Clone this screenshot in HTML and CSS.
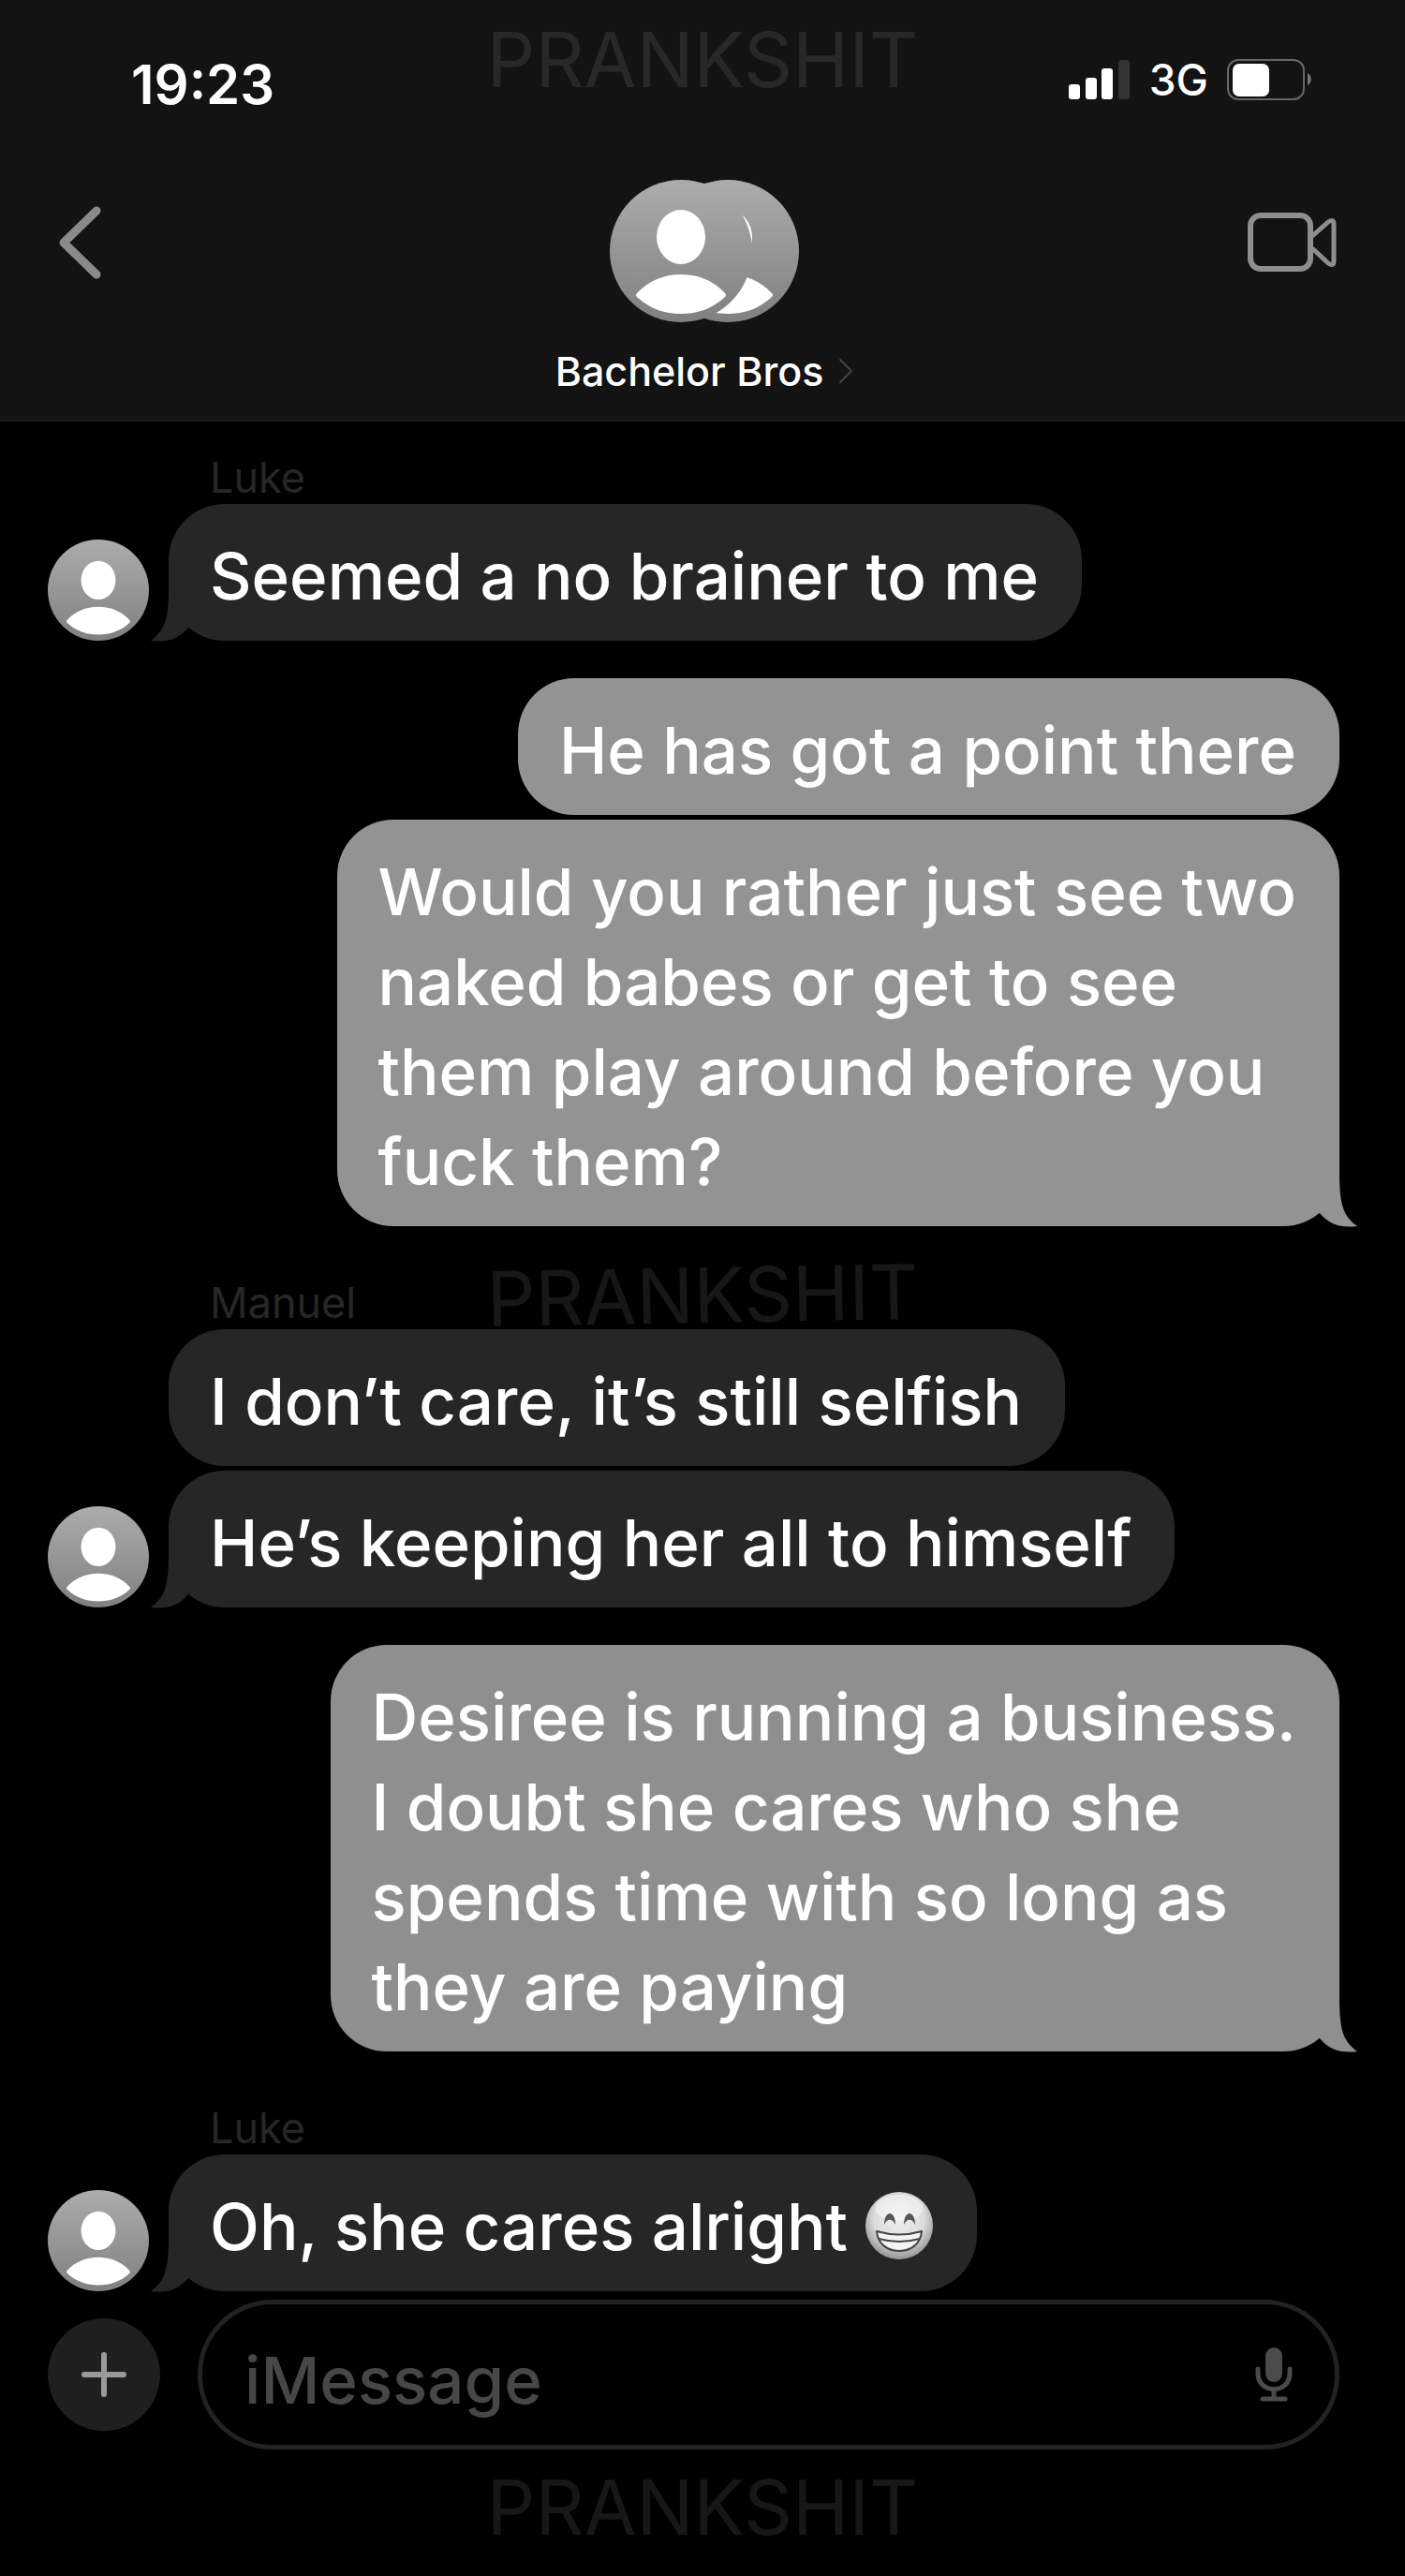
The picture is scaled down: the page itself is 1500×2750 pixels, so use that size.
FILE: index.html
```html
<!DOCTYPE html>
<html lang="en">
<head>
  <meta charset="UTF-8" />
  <meta name="viewport" content="width=device-width, initial-scale=1.0"/>
  <title>Bachelor Bros</title>
  <link rel="stylesheet" href="styles.css">
</head>
<body>

<!-- shared shapes -->
<svg class="defs" width="0" height="0" aria-hidden="true">
  <defs>
    <linearGradient id="avatarFill" x1="0" y1="0" x2="0" y2="1">
      <stop offset="0" stop-color="#acacac"/>
      <stop offset="1" stop-color="#808080"/>
    </linearGradient>
    <radialGradient id="faceFill" cx="0.5" cy="0.4" r="0.62">
      <stop offset="0" stop-color="#efefef"/>
      <stop offset="0.6" stop-color="#dcdcdc"/>
      <stop offset="1" stop-color="#8e8e8e"/>
    </radialGradient>
    <symbol id="avatar" viewBox="0 0 152 152">
      <circle cx="76" cy="76" r="76" fill="url(#avatarFill)"/>
      <ellipse cx="76" cy="61" rx="26" ry="29" fill="#fff"/>
      <path d="M29 121c12-13 28-20 47-20s35 7 47 20q2 2 0 4c-14 13-30 18-47 18s-33-5-47-18q-2-2 0-4z" fill="#fff"/>
    </symbol>
    <symbol id="tail" viewBox="0 0 60 61">
      <path d="M40 0v3c0 34 4 46 19 57c-17 2-29-1-40-14L6 20z" fill="currentColor"/>
    </symbol>
  </defs>
</svg>

<div class="phone">

  <header class="header">
    <div class="watermark watermark-top">PRANKSHIT</div>

    <div class="status">
      <span class="time">19:23</span>
      <div class="status-icons">
        <svg width="66" height="42" viewBox="0 0 66 42" fill="#fff" aria-hidden="true">
          <rect x="0" y="26" width="12" height="16" rx="3"/>
          <rect x="18" y="19" width="12" height="23" rx="3"/>
          <rect x="35" y="9" width="12" height="33" rx="3"/>
          <rect x="53" y="0" width="12" height="42" rx="3" fill="#333"/>
        </svg>
        <span class="network">3G</span>
        <svg width="90" height="44" viewBox="0 0 90 44" aria-hidden="true">
          <rect x="1" y="1" width="81" height="42" rx="11" fill="none" stroke="#666" stroke-width="2"/>
          <rect x="6" y="5" width="39" height="35" rx="7" fill="#fff"/>
          <path d="M86 15c5 3 5 10 0 13z" fill="#777"/>
        </svg>
      </div>
    </div>

    <div class="nav">
      <button class="icon-button" type="button" aria-label="Back">
        <svg width="48" height="80" viewBox="0 0 48 80" fill="none" stroke="#8a8a8a" stroke-width="9" stroke-linecap="round" stroke-linejoin="round">
          <path d="M41 6L6 40l35 34"/>
        </svg>
      </button>

      <div class="contact">
        <div class="group-avatar">
          <svg class="group-back" width="152" height="152"><use href="#avatar"/></svg>
          <svg class="group-front" width="152" height="152"><use href="#avatar"/></svg>
        </div>
        <a class="contact-name" href="#">
          Bachelor Bros
          <svg width="16" height="28" viewBox="0 0 16 28" fill="none" stroke="#444" stroke-width="2" stroke-linecap="round">
            <path d="M2 2l12 12L2 26"/>
          </svg>
        </a>
      </div>

      <button class="icon-button" type="button" aria-label="Video call">
        <svg width="96" height="64" viewBox="0 0 96 64" fill="none" stroke="#8e8e8e" stroke-width="6" stroke-linejoin="round">
          <rect x="3" y="3" width="64" height="57" rx="11"/>
          <path d="M69 25L86 10q6-4 6 2v40q0 6-6 2L69 38" stroke-width="5"/>
        </svg>
      </button>
    </div>
  </header>

  <main class="chat">
    <p class="sender">Luke</p>
    <div class="row">
      <svg class="avatar"><use href="#avatar"/></svg>
      <div class="bubbles">
        <div class="bubble">Seemed a no brainer to me<svg class="tail"><use href="#tail"/></svg></div>
      </div>
    </div>

    <div class="row mine">
      <div class="bubbles">
        <div class="bubble">He has got a point there</div>
        <div class="bubble">Would you rather just see two<br>naked babes or get to see<br>them play around before you<br>fuck them?<svg class="tail"><use href="#tail"/></svg></div>
      </div>
    </div>

    <p class="sender">Manuel</p>
    <div class="row">
      <svg class="avatar"><use href="#avatar"/></svg>
      <div class="bubbles">
        <div class="bubble">I don’t care, it’s still selfish</div>
        <div class="bubble">He’s keeping her all to himself<svg class="tail"><use href="#tail"/></svg></div>
      </div>
    </div>

    <div class="row mine late">
      <div class="bubbles">
        <div class="bubble">Desiree is running a business.<br>I doubt she cares who she<br>spends time with so long as<br>they are paying<svg class="tail"><use href="#tail"/></svg></div>
      </div>
    </div>

    <p class="sender">Luke</p>
    <div class="row">
      <svg class="avatar"><use href="#avatar"/></svg>
      <div class="bubbles">
        <div class="bubble">Oh, she cares alright
          <svg class="emoji" viewBox="0 0 74 74" role="img" aria-label="Grinning face with smiling eyes">
            <circle cx="37" cy="37" r="36" fill="url(#faceFill)"/>
            <ellipse cx="37" cy="18" rx="26" ry="14" fill="#fff" opacity="0.4"/>
            <path d="M21 36c0-16 12-16 12 0c-3-7-9-7-12 0z" fill="#555"/>
            <path d="M42 36c0-16 12-16 12 0c-3-7-9-7-12 0z" fill="#555"/>
            <path d="M13 43q24 7 48 0c-1 13-11 21-24 21S14 56 13 43z" fill="#f4f4f4" stroke="#444" stroke-width="2" stroke-linejoin="round"/>
            <path d="M15 51q22 6 44 0" fill="none" stroke="#444" stroke-width="2"/>
          </svg>
          <svg class="tail"><use href="#tail"/></svg>
        </div>
      </div>
    </div>

    <div class="watermark watermark-middle">PRANKSHIT</div>
  </main>

  <footer class="footer">
    <form class="composer">
      <button class="plus" type="button" aria-label="Add attachment">
        <svg width="48" height="48" viewBox="0 0 48 48" stroke="#9a9a9a" stroke-width="6" stroke-linecap="round">
          <path d="M24 3v42M3 24h42"/>
        </svg>
      </button>
      <div class="field">
        <input type="text" id="message" placeholder="iMessage" aria-label="Message" />
        <button class="icon-button" type="button" aria-label="Dictate">
          <svg width="40" height="58" viewBox="0 0 40 58" fill="none" stroke="#4b4b4b" stroke-width="5" stroke-linecap="round">
            <rect x="11" y="0" width="18" height="37" rx="9" fill="#4b4b4b" stroke="none"/>
            <path d="M3 23v5c0 22 34 22 34 0v-5M20 45v9M8 55h24"/>
          </svg>
        </button>
      </div>
    </form>
    <div class="watermark watermark-bottom">PRANKSHIT</div>
  </footer>

</div>

</body>
</html>
```
FILE: styles.css
```css
* {
  box-sizing: border-box;
}

body {
  margin: 0;
  background: #000;
  color: #fff;
  font-family: Inter, "Liberation Sans", sans-serif;
}

button {
  padding: 0;
  border: none;
  background: none;
  cursor: pointer;
}

svg {
  display: block;
}

.defs {
  position: absolute;
}

.phone {
  display: flex;
  flex-direction: column;
  min-height: 100vh;
}

/* header */
.header {
  position: relative;
  background: #131313;
  border-bottom: 2px solid #1a1a1a;
}

.status {
  display: flex;
  justify-content: space-between;
  align-items: center;
  padding: 48px 100px 0 140px;
}

.time {
  font-size: 58px;
  line-height: 84px;
  font-weight: 600;
}

.status-icons {
  display: flex;
  align-items: center;
  gap: 20px;
  padding-bottom: 10px;
}

.network {
  font-size: 46px;
  line-height: 50px;
  font-weight: 500;
}

.nav {
  display: grid;
  grid-template-columns: 1fr auto 1fr;
  align-items: start;
  padding: 60px 58px 20px 62px;
}

.nav .icon-button {
  display: flex;
  align-items: center;
  height: 80px;
  margin-top: 27px;
}

.nav .icon-button:last-child {
  justify-self: end;
  margin-right: 14px;
}

.contact {
  display: flex;
  flex-direction: column;
  align-items: center;
}

.group-avatar {
  display: flex;
  flex-direction: row-reverse;
}

.group-back {
  margin-left: -102px;
}

.group-front {
  position: relative;
}

.contact-name {
  display: flex;
  align-items: center;
  gap: 16px;
  margin-top: 20px;
  color: #fff;
  font-size: 43px;
  line-height: 64px;
  font-weight: 500;
  text-decoration: none;
}

/* messages */
.chat {
  position: relative;
  flex: 1;
  padding: 18px 70px 0 51px;
}

.sender {
  margin: 40px 0 0;
  padding: 14px 0 0 173px;
  color: #272727;
  font-size: 45px;
  line-height: 56px;
}

.sender:first-child {
  margin-top: 0;
}

.row {
  display: flex;
  align-items: flex-end;
  gap: 21px;
}

.row.mine {
  justify-content: flex-end;
  margin-top: 40px;
}

.avatar {
  width: 108px;
  height: 108px;
}

.bubbles {
  display: flex;
  flex-direction: column;
  align-items: flex-start;
  gap: 5px;
}

.mine .bubbles {
  align-items: flex-end;
}

.bubble {
  position: relative;
  padding: 29px 46px 21px 44px;
  border-radius: 60px;
  background: #262626;
  font-size: 69px;
  line-height: 96px;
  font-weight: 500;
}

.mine .bubble {
  background: #939393;
}

.mine.late .bubble {
  background: #8f8f8f;
}

.tail {
  position: absolute;
  left: -20px;
  bottom: -1px;
  width: 60px;
  height: 61px;
  color: #262626;
  transform: scaleX(-1);
}

.mine .tail {
  left: auto;
  right: -20px;
  color: #939393;
  transform: none;
}

.mine.late .tail {
  color: #8f8f8f;
}

.emoji {
  display: inline-block;
  width: 74px;
  height: 74px;
  vertical-align: -11px;
}

/* composer */
.footer {
  padding: 9px 0 25px;
}

.composer {
  display: flex;
  align-items: center;
  gap: 40px;
  padding: 0 70px 0 51px;
}

.plus {
  flex-shrink: 0;
  display: flex;
  justify-content: center;
  align-items: center;
  width: 120px;
  height: 120px;
  border-radius: 50%;
  background: #1f1f1f;
}

.field {
  flex: 1;
  display: flex;
  align-items: center;
  height: 160px;
  padding: 0 45px;
  border: 5px solid #222;
  border-radius: 80px;
}

.field input {
  flex: 1;
  min-width: 0;
  padding: 12px 0 0;
  border: none;
  outline: none;
  background: none;
  color: #fff;
  font-family: inherit;
  font-size: 69px;
  line-height: 96px;
  font-weight: 500;
}

.field input::placeholder {
  color: #474747;
  opacity: 1;
}

/* watermarks */
.watermark {
  color: rgba(255, 255, 255, 0.09);
  font-size: 81px;
  line-height: 96px;
  text-align: center;
  pointer-events: none;
}

.watermark-top {
  position: absolute;
  top: 16px;
  left: 0;
  right: 0;
}

.watermark-middle {
  position: absolute;
  top: 885px;
  left: 0;
  right: 0;
  transform: rotate(-1deg);
}

.watermark-bottom {
  margin-top: 14px;
}
```
